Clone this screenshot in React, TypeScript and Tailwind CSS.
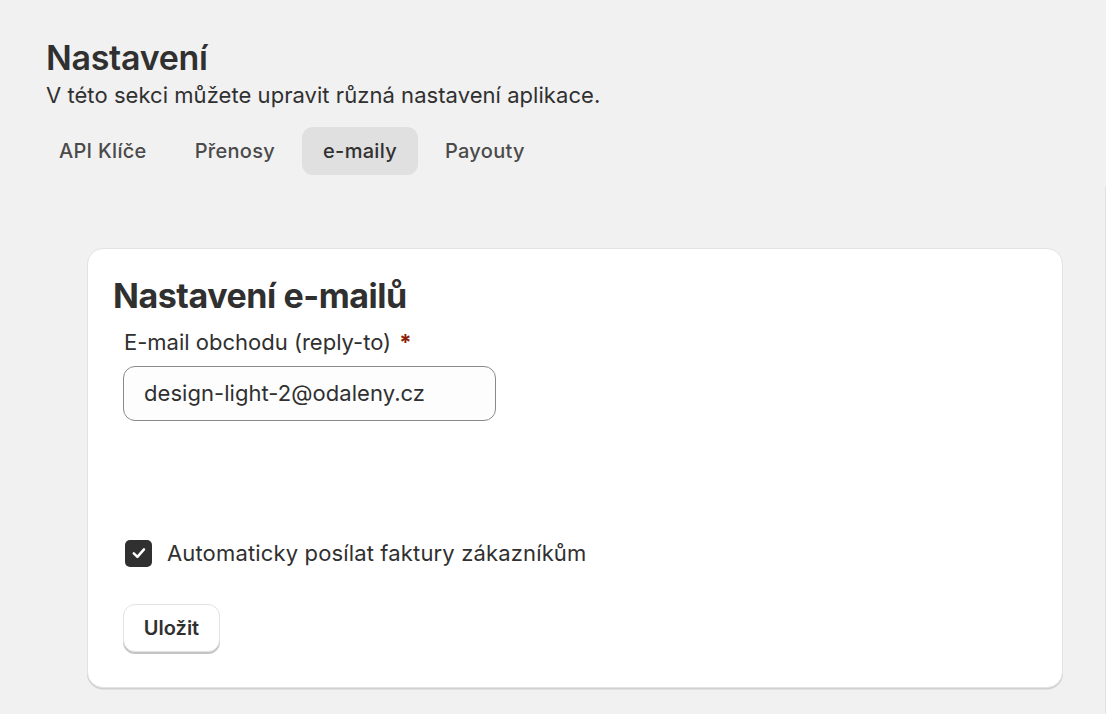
import React from "react";

export default function App() {
  const tabs = ["API Klíče", "Přenosy", "e-maily", "Payouty"];
  return (
    <div
      className="min-h-[714px] w-full bg-[#f1f1f1] text-[#303030]"
      style={{ fontFamily: "Inter, 'Noto Sans', sans-serif" }}
    >
      <div className="pl-[46px] pt-[38px]">
        <h1 className="text-[34px] leading-[40px] font-semibold tracking-[-0.3px] text-[#303030]">
          Nastavení
        </h1>
        <p className="text-[22px] leading-[30px] tracking-[0.05px] text-[#303030] mt-[2px]">
          V této sekci můžete upravit různá nastavení aplikace.
        </p>
        <div className="flex gap-[6px] ml-[-8px] mt-[17px]">
          {tabs.map((t) => (
            <div
              key={t}
              className={
                t === "e-maily"
                  ? "h-[48px] px-[21px] flex items-center rounded-[11px] bg-[#e0e0e0] text-[20px] tracking-[0.3px] font-medium text-[#303030]"
                  : "h-[48px] px-[21px] flex items-center rounded-[11px] text-[20px] tracking-[0.3px] font-medium text-[#4a4a4a]"
              }
            >
              {t}
            </div>
          ))}
        </div>
      </div>
      <div className="mt-[12px] border-r border-[#e2e2e2] pt-[61px] pb-[26px] pl-[87px]">
        <div className="w-[976px] h-[440px] bg-white rounded-[16px] border border-[#e3e3e3] shadow-[0_1.5px_0_0_#d0d0d0] pt-[27px] pl-[25px]">
          <h2 className="text-[34px] leading-[40px] font-bold tracking-[-0.45px] text-[#303030]">
            Nastavení e-mailů
          </h2>
          <div className="pl-[10px] mt-[11px]">
            <label className="block ml-[1px] text-[22px] leading-[30px] text-[#303030]">
              E-mail obchodu (reply-to){" "}
              <span className="text-[#8e1f0b] font-bold ml-[2px]">*</span>
            </label>
            <div className="mt-[9px] w-[373px] h-[55px] rounded-[12px] border border-[#8a8a8a] bg-[#fdfdfd] flex items-center pl-[20px] text-[22px] tracking-[0.05px] text-[#303030]">
              design-light-2@odaleny.cz
            </div>
            <div className="mt-[117px] flex items-center gap-[15px]">
              <div className="ml-[2px] w-[27px] h-[27px] rounded-[5px] bg-[#303030] flex items-center justify-center">
                <svg width="20" height="20" viewBox="0 0 20 20" fill="none">
                  <path
                    d="M4.8 10.4 L8.4 13.8 L15 6.4"
                    stroke="white"
                    strokeWidth="2.5"
                    strokeLinecap="round"
                    strokeLinejoin="round"
                  />
                </svg>
              </div>
              <span className="text-[22px] leading-[30px] tracking-[0.15px] text-[#303030]">
                Automaticky posílat faktury zákazníkům
              </span>
            </div>
            <button className="mt-[36px] h-[48px] w-[97px] rounded-[12px] bg-white border border-[#e3e3e3] shadow-[0_2px_0_0_#c4c4c4] text-[20px] font-semibold text-[#303030]">
              Uložit
            </button>
          </div>
        </div>
      </div>
    </div>
  );
}
